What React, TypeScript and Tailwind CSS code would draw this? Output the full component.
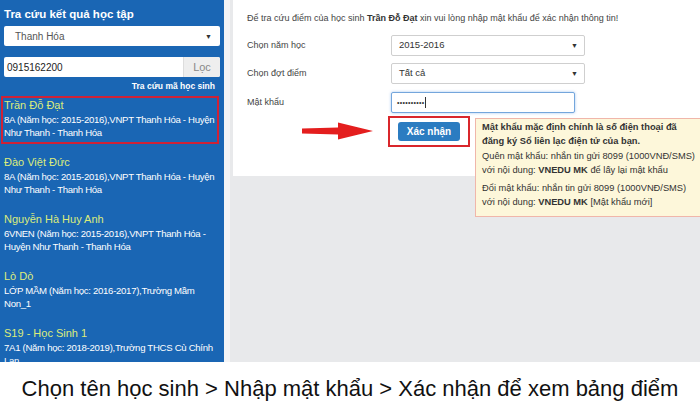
import React from 'react';

type Student = {
  name: string;
  lines: string[];
  active?: boolean;
};

const students: Student[] = [
  { name: 'Trần Đỗ Đạt', lines: ['8A (Năm học: 2015-2016),VNPT Thanh Hóa - Huyện', 'Như Thanh - Thanh Hóa'], active: true },
  { name: 'Đào Việt Đức', lines: ['8A (Năm học: 2015-2016),VNPT Thanh Hóa - Huyện', 'Như Thanh - Thanh Hóa'] },
  { name: 'Nguyễn Hà Huy Anh', lines: ['6VNEN (Năm học: 2015-2016),VNPT Thanh Hóa -', 'Huyện Như Thanh - Thanh Hóa'] },
  { name: 'Lò Dò', lines: ['LỚP MẦM (Năm học: 2016-2017),Trường Mầm', 'Non_1'] },
  { name: 'S19 - Học Sinh 1', lines: ['7A1 (Năm học: 2018-2019),Trường THCS Cù Chính', 'Lan'] },
];

function Caret() {
  return <span className="text-[7px] leading-none text-[#333]">▼</span>;
}

function Sidebar() {
  return (
    <div className="w-[224px] shrink-0 overflow-hidden bg-[#1a66b4] px-[1px] pt-[7px]">
      <div className="mx-[3px] text-[11.5px] font-bold leading-[14px] text-white">Tra cứu kết quả học tập</div>

      <div className="mx-[3px] mt-[5px] flex h-[20px] items-center justify-between rounded-[2px] bg-white pl-[11px] pr-[8px]">
        <span className="text-[10px] text-[#555]">Thanh Hóa</span>
        <Caret />
      </div>

      <div className="mx-[3px] mt-[11px] flex h-[20px] overflow-hidden rounded-[2px] bg-white">
        <span className="flex flex-1 items-center pl-[3px] text-[10px] text-[#222]">0915162200</span>
        <span className="flex w-[37px] items-center justify-center border-l border-[#ddd] bg-[#eeeeee] text-[11px] text-[#888]">
          Lọc
        </span>
      </div>

      <div className="mx-[3px] mt-[3px] pr-[5px] text-right text-[8.5px] font-bold leading-[12px] text-white">
        Tra cứu mã học sinh
      </div>

      <div className="mt-[4px] flex w-[218px] flex-col gap-[9.5px]">
        {students.map((s) => (
          <div
            key={s.name}
            className={`shrink-0 whitespace-nowrap border-2 px-[1px] pb-[2px] pt-[1px] leading-[13.5px] ${
              s.active ? 'border-[#cf2236]' : 'border-transparent'
            }`}
          >
            <div className="text-[11px] text-[#dcec7c]">{s.name}</div>
            {s.lines.map((l) => (
              <div key={l} className="text-[9.6px] tracking-[-0.3px] text-white">
                {l}
              </div>
            ))}
          </div>
        ))}
      </div>
    </div>
  );
}

function FormRow({ label, children }: { label: string; children: React.ReactNode }) {
  return (
    <div className="flex h-[21px] items-center">
      <span className="w-[144px] shrink-0 text-[9px] text-[#444]">{label}</span>
      {children}
    </div>
  );
}

function SelectBox({ value }: { value: string }) {
  return (
    <div className="flex h-[21px] w-[194px] items-center justify-between rounded-[2px] border border-[#cfcfcf] bg-white pl-[7px] pr-[6px]">
      <span className="text-[9.5px] text-[#333]">{value}</span>
      <Caret />
    </div>
  );
}

function MainPanel() {
  return (
    <div className="flex flex-1 bg-[#f4f4f5] pl-[6px]">
      <div className="flex flex-1 flex-col bg-[#e8e9eb] pl-[3px]">
        <div className="h-[176px] shrink-0 bg-white pl-[14px] pt-[13px]">
          <p className="text-[9px] leading-[11px] text-[#444]">
            Để tra cứu điểm của học sinh <b className="text-[#333]">Trần Đỗ Đạt</b> xin vui lòng nhập mật khẩu để xác nhận
            thông tin!
          </p>

          <div className="mt-[11px] flex flex-col gap-[7px]">
            <FormRow label="Chọn năm học">
              <SelectBox value="2015-2016" />
            </FormRow>
            <FormRow label="Chọn đợt điểm">
              <SelectBox value="Tất cả" />
            </FormRow>
            <div className="mt-[1px]">
              <FormRow label="Mật khẩu">
                <div className="flex h-[21px] w-[184px] items-center rounded-[2px] border border-[#74a6dc] bg-white pl-[5px] shadow-[0_0_3px_rgba(102,160,230,0.6)]">
                  <span className="text-[7px] leading-none tracking-[0.3px] text-[#333]">••••••••••</span>
                  <span className="h-[11px] w-px bg-[#333]" />
                </div>
              </FormRow>
            </div>
          </div>

          <div className="ml-[141px] mt-[3px] flex h-[31px] w-[82px] items-center justify-center border-2 border-[#d9262b]">
            <button className="flex h-[19px] w-[62px] items-center justify-center rounded-[3px] bg-[#2b7cc1] text-[10px] font-bold text-white">
              Xác nhận
            </button>
          </div>
        </div>
      </div>
    </div>
  );
}

export default function App() {
  return (
    <div className="relative h-[417px] w-[700px] overflow-hidden bg-white font-['Liberation_Sans',Arial,sans-serif]">
      <div className="flex h-[362px]">
        <Sidebar />
        <MainPanel />
      </div>

      <div className="flex h-[55px] items-center justify-center pb-[2px] text-[22px] text-[#111]">
        Chọn tên học sinh &gt; Nhập mật khẩu &gt; Xác nhận để xem bảng điểm
      </div>

      {/* red pointer arrow */}
      <svg className="absolute left-[302px] top-[122px]" width="72" height="18" viewBox="0 0 72 18">
        <path d="M0 6.5 L36 5.5 L36 0.5 L71 9 L36 17.5 L36 12.5 L0 11.5 Z" fill="#e41e1e" />
      </svg>

      {/* password hint tooltip */}
      <div className="absolute left-[475px] top-[118px] w-[240px] border border-[#f0b6aa] bg-[#fdf7da] pb-[7px] pl-[6px] pt-[2px] text-[9.3px] leading-[13.5px] text-[#333]">
        <p className="font-bold">
          Mật khẩu mặc định chính là số điện thoại đã
          <br />
          đăng ký Sổ liên lạc điện tử của bạn.
        </p>
        <p className="mt-[2px]">
          Quên mật khẩu: nhắn tin gửi 8099 (1000VNĐ/SMS)
          <br />
          với nội dung: <b>VNEDU MK</b> để lấy lại mật khẩu
        </p>
        <p className="mt-[5px]">
          Đổi mật khẩu: nhắn tin gửi 8099 (1000VNĐ/SMS)
          <br />
          với nội dung: <b>VNEDU MK</b> [Mật khẩu mới]
        </p>
      </div>
    </div>
  );
}
